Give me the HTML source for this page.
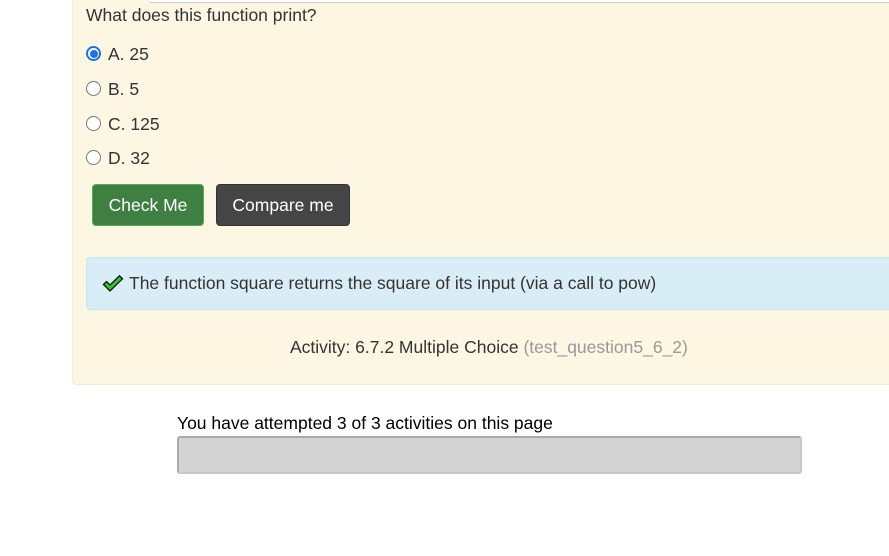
<!DOCTYPE html>
<html><head><meta charset="utf-8"><style>
body{margin:0;width:889px;height:556px;background:#fff;font-family:"Liberation Sans",Arial,sans-serif;color:#333;position:relative;overflow:hidden}
.panel{position:absolute;left:72px;top:-10px;width:830px;height:395px;background:#fcf6e3;border:1px solid #f3ecd6;border-radius:4px;box-sizing:border-box}
.topline{position:absolute;left:150px;top:0;width:760px;height:2px;border-bottom:1px solid #ccc;background:#fff}
.q{position:absolute;left:86px;top:5px;font-size:17.5px}
.opt{position:absolute;left:86px;font-size:17.5px;display:flex;align-items:center}
.rad{width:15px;height:15px;border:1px solid #767676;border-radius:50%;box-sizing:border-box;margin-right:7px;background:#fff;position:relative;top:-1px}
.rad.on{border:2px solid #1a73e8;}
.rad.on::after{content:"";position:absolute;left:1.5px;top:1.5px;width:8px;height:8px;border-radius:50%;background:#1a73e8}
.btn{position:absolute;top:184px;height:42px;border-radius:4px;color:#fff;font-size:17.5px;display:flex;align-items:center;justify-content:center;box-sizing:border-box}
.fb{position:absolute;left:86px;top:257px;width:820px;height:53px;background:#d9edf7;border:1px solid #bce8f1;border-radius:4px;box-sizing:border-box;font-size:17.5px;display:flex;align-items:center}
.act{position:absolute;left:290px;top:337px;font-size:17.5px}
.att{position:absolute;left:177px;top:413px;font-size:17.5px;color:#000}
.bar{position:absolute;left:177px;top:436px;width:625px;height:38px;background:#d3d3d3;border:2px solid #a8a8a8;border-right-color:#c8c8c8;border-bottom-color:#c8c8c8;border-radius:3px;box-sizing:border-box}
</style></head><body>
<div class="panel"></div>
<div class="topline"></div>
<div class="q">What does this function print?</div>
<div class="opt" style="top:44px"><span class="rad on"></span>A. 25</div>
<div class="opt" style="top:79px"><span class="rad"></span>B. 5</div>
<div class="opt" style="top:114px"><span class="rad"></span>C. 125</div>
<div class="opt" style="top:148px"><span class="rad"></span>D. 32</div>
<div class="btn" style="left:92px;width:112px;background:#3f7f42;border:1px solid #4cae4c">Check Me</div>
<div class="btn" style="left:216px;width:134px;background:#454545;border:1px solid #333">Compare me</div>
<div class="fb"><svg width="22" height="18" viewBox="0 0 22 18" style="margin-left:15px;margin-right:5px"><path d="M1.5 9.5 L4.5 6.5 L8 10 L17.5 0.8 L20.5 3.8 L8 16 Z" fill="#2fc52f" stroke="#111" stroke-width="1.3" stroke-linejoin="miter"/></svg>The function square returns the square of its input (via a call to pow)</div>
<div class="act">Activity: 6.7.2 Multiple Choice <span style="color:#999">(test_question5_6_2)</span></div>
<div class="att">You have attempted 3 of 3 activities on this page</div>
<div class="bar"></div>
</body></html>
